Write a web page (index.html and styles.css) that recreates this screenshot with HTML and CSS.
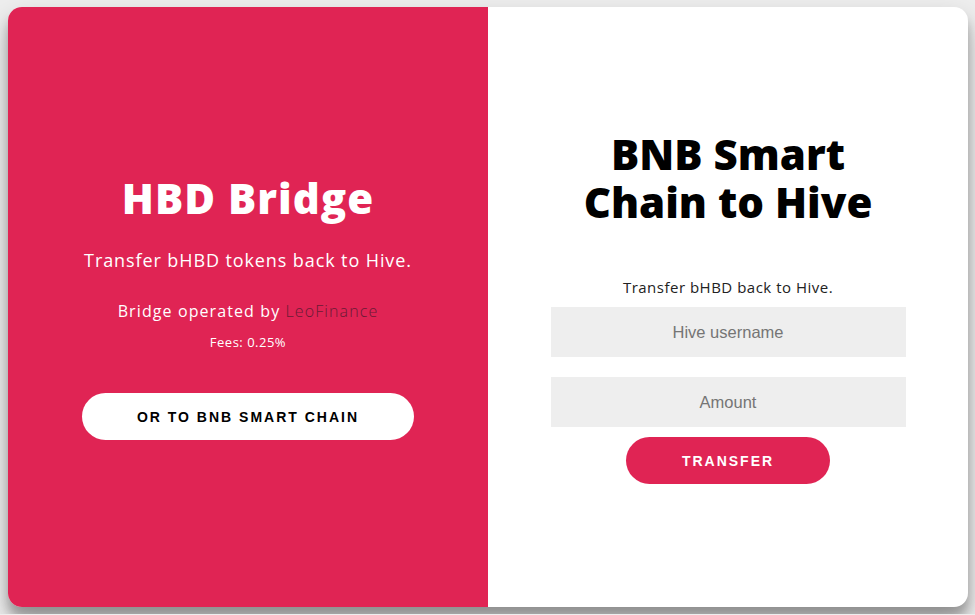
FILE: index.html
```html
<!DOCTYPE html>
<html lang="en">
<head>
  <meta charset="UTF-8">
  <title>HBD Bridge</title>
  <link rel="stylesheet" href="styles.css">
</head>
<body>

<div class="container">
  <div class="panel panel-left">
    <h1>HBD Bridge</h1>
    <p class="lead">Transfer bHBD tokens back to Hive.</p>
    <p class="operated">Bridge operated by <a href="#" class="leo">LeoFinance</a></p>
    <p class="fees">Fees: 0.25%</p>
    <button class="btn btn-ghost">Or to BNB Smart Chain</button>
  </div>

  <div class="panel panel-right">
    <form onsubmit="return false">
      <h1>BNB Smart<br>Chain to Hive</h1>
      <p class="hint">Transfer bHBD back to Hive.</p>
      <input type="text" placeholder="Hive username">
      <input type="text" placeholder="Amount">
      <button class="btn btn-red">Transfer</button>
    </form>
  </div>
</div>

</body>
</html>
```

FILE: styles.css
```css
body {
  margin: 0;
  padding: 7px 8px;
  background: #eeeeee;
  font-family: "Open Sans", sans-serif;
}

.container {
  width: 960px;
  height: 600px;
  display: flex;
  border-radius: 14px;
  overflow: hidden;
  background: #fff;
  box-shadow: 0 14px 28px rgba(0,0,0,0.25), 0 10px 10px rgba(0,0,0,0.22);
}

.panel {
  width: 50%;
  display: flex;
  flex-direction: column;
  align-items: center;
  justify-content: center;
  text-align: center;
}

.panel-left {
  background: #e02454;
  color: #fff;
}

h1 {
  margin: 0;
  font-size: 42px;
  line-height: 48px;
  font-weight: 800;
}

.panel-left h1 {
  margin-bottom: 26px;
  letter-spacing: 1px;
}

.lead {
  margin: 0 0 28px;
  font-size: 18px;
  letter-spacing: 0.9px;
}

.operated {
  margin: 0 0 11px;
  font-size: 16px;
  letter-spacing: 1.1px;
}

.leo {
  color: #6a1a35;
  font-weight: 300;
  text-decoration: none;
}

.fees {
  margin: 0 0 42px;
  font-size: 13px;
  letter-spacing: 0.5px;
}

.btn {
  border: none;
  border-radius: 24px;
  height: 47px;
  font-family: "Liberation Sans", Arial, sans-serif;
  font-size: 14px;
  font-weight: bold;
  letter-spacing: 2px;
  text-transform: uppercase;
  cursor: pointer;
}

.btn-ghost {
  width: 332px;
  background: #fff;
  color: #000;
}

.btn-red {
  width: 204px;
  background: #e02454;
  color: #fff;
}

form {
  display: flex;
  flex-direction: column;
  align-items: center;
  width: 355px;
}

.panel-right h1 {
  color: #000;
  margin-bottom: 51px;
}

.hint {
  margin: 0 0 10px;
  font-size: 15px;
  letter-spacing: 0.5px;
  color: #222;
}

input {
  width: 100%;
  height: 50px;
  box-sizing: border-box;
  border: none;
  background: #eeeeee;
  margin-bottom: 20px;
  text-align: center;
  font-family: "Liberation Sans", Arial, sans-serif;
  font-size: 16.5px;
}

input::placeholder {
  color: #757575;
}

input + input + button {
  margin-top: -10px;
}
```
